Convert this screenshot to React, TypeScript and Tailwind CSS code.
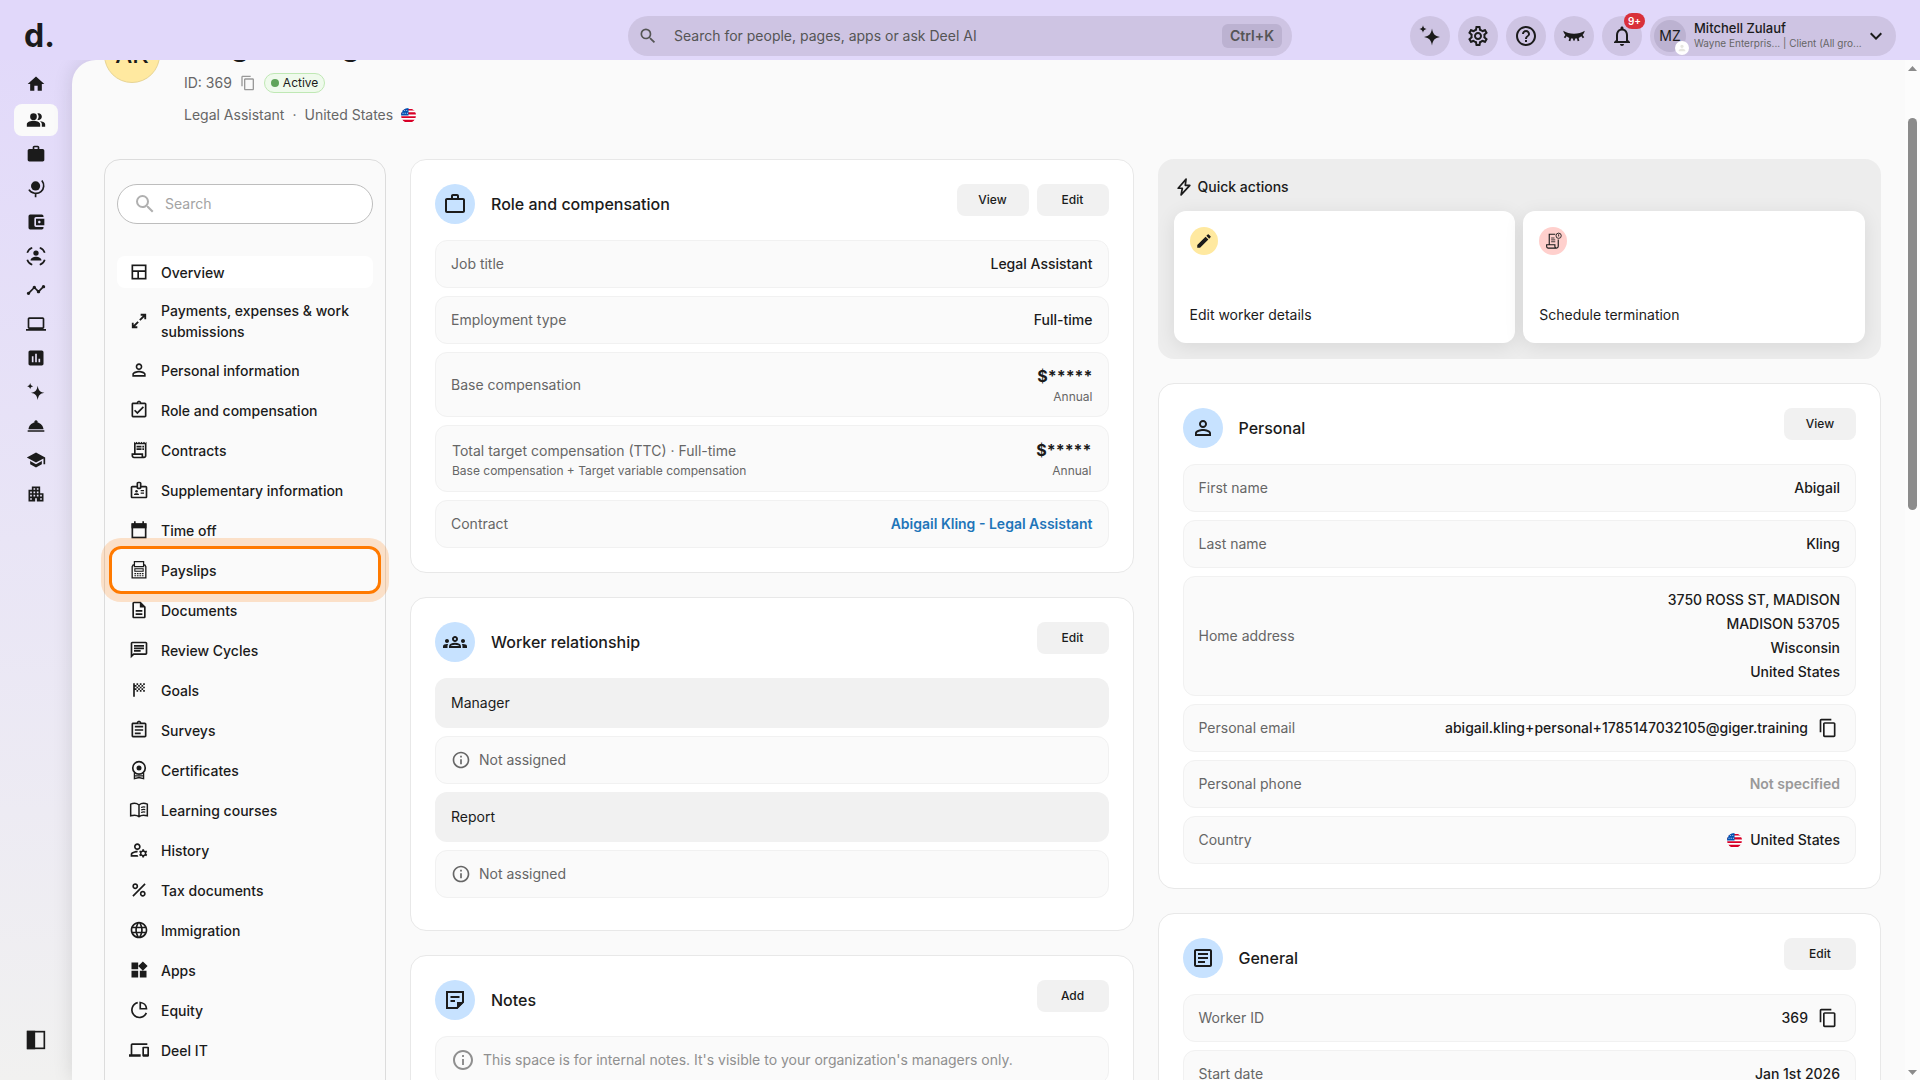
import React from 'react';
import clsx from 'clsx';
import {
  MdAccountBalanceWallet,
  MdApartment,
  MdAssessment,
  MdContentCopy,
  MdEdit,
  MdHelpOutline,
  MdHome,
  MdInfoOutline,
  MdKeyboardArrowDown,
  MdLanguage,
  MdLaptop,
  MdNotificationsNone,
  MdOutlineArticle,
  MdOutlineAssignment,
  MdOutlineAssignmentTurnedIn,
  MdOutlineBadge,
  MdOutlineChat,
  MdOutlineDescription,
  MdOutlineDevices,
  MdOutlineGroups,
  MdOutlineManageAccounts,
  MdOutlineReceiptLong,
  MdOutlineSettings,
  MdPeopleAlt,
  MdPercent,
  MdPermIdentity,
  MdPerson,
  MdRoomService,
  MdSchool,
  MdSearch,
  MdSportsScore,
  MdTimeline,
  MdWidgets,
  MdWork,
  MdWorkOutline,
} from 'react-icons/md';

type IconType = React.ComponentType<{ className?: string }>;

function icon(children: React.ReactNode, filled = false): IconType {
  return function Icon({ className }) {
    return (
      <svg
        viewBox="0 0 24 24"
        className={className}
        fill={filled ? 'currentColor' : 'none'}
        stroke={filled ? 'none' : 'currentColor'}
        strokeWidth={2}
        aria-hidden="true"
      >
        {children}
      </svg>
    );
  };
}

const Sparkles = icon(
  <>
    <path d="M14 4.5c1 5.6 2.6 7.3 8 8.5-5.4 1.2-7 2.9-8 8.5-1-5.6-2.6-7.3-8-8.5 5.4-1.2 7-2.900 8-8.500z" />
    <path d="M5 1.200c.5 2.500 1.300 3.300 3.600 3.800C6.300 5.500 5.500 6.300 5 8.800 4.500 6.300 3.700 5.500 1.400 5 3.700 4.500 4.500 3.700 5 1.200z" />
  </>,
  true,
);
const GlobeStand = icon(
  <>
    <circle cx="11.500" cy="9.500" r="5.500" fill="currentColor" stroke="none" />
    <path d="M19 3c3.400 4.300 2.800 10.200-1 13.300-4.200 3.400-11.500 2.700-14.500-2.300M11.500 18v5" />
  </>,
);
const PersonFocus = icon(
  <>
    <circle cx="12" cy="8.500" r="3.200" fill="currentColor" stroke="none" />
    <path d="M5.500 17.500c0-3 3.500-4.500 6.500-4.500s6.500 1.500 6.500 4.500z" fill="currentColor" stroke="none" />
    <path d="M1.500 8C2.500 5 4.500 3 7.500 2M16.500 2c3 1 5 3 6 6M1.500 16.500c1 3 3 5 6 6M22.500 16.500c-1 3-3 5-6 6" />
  </>,
);
const Panel = icon(
  <>
    <rect x="2" y="2" width="20" height="20" />
    <path d="M2 2h8v20H2z" fill="currentColor" />
  </>,
);
const ClosedEye = icon(
  <>
    <path d="M1.200 6.800c3 2 6.800 2.900 10.800 2.900s7.800-.9 10.800-2.900c-1.200 4.500-5.300 8-10.800 8S2.400 11.300 1.200 6.800z" fill="currentColor" stroke="none" />
    <path d="M4.500 11l-2 2.800M8.500 13l-1 4M15.500 13l1 4M19.500 11l2 2.800M12 14v2.500" strokeWidth="1.800" />
  </>,
);
const Overview = icon(
  <>
    <rect x="4" y="4" width="16" height="16" />
    <path d="M4 11h16M11 11v9" />
  </>,
);
const Transfer = icon(
  <path d="M13 11l6.500-6.500M14 4.500h5.500V10M11 13l-6.500 6.500M4.500 14v5.500H10" strokeWidth="2.200" />,
);
const Calendar = icon(
  <>
    <rect x="4" y="5" width="16" height="16" />
    <path d="M3 4h18v6H3z" fill="currentColor" stroke="none" />
    <path d="M7 1.500V5M17 1.500V5" />
  </>,
);
const PayMachine = icon(
  <>
    <path d="M6.500 8V2h11v6z" strokeWidth="1.500" />
    <path d="M6 6H5L3.800 8v13.500h16.400V8L19 6h-1" strokeWidth="1.600" />
    <rect x="7" y="10.500" width="10" height="3" strokeWidth="1.300" />
    <path d="M6.500 16.300h11M6.500 18.900h11" strokeWidth="1.400" strokeDasharray="2 1" />
  </>,
);
const Rosette = icon(
  <>
    <circle cx="12" cy="9.500" r="7.500" />
    <circle cx="12" cy="9.500" r="3" fill="currentColor" stroke="none" />
    <path d="M6.500 15.500v7l5.500-1.500 5.500 1.500v-7M7 19h10" strokeWidth="1.600" />
  </>,
);
const OpenBook = icon(
  <>
    <path d="M12 6C9.500 4 5 3.800 2 5v14c3-1 7.500-1 10 1 2.500-2 7-2 10-1V5c-3-1.200-7.500-1-10 1zM12 6v14" strokeWidth="1.800" />
    <path d="M14.500 9c1.600-.7 3.300-.8 5-.5M14.500 12c1.600-.7 3.300-.8 5-.5M14.500 15c1.600-.7 3.300-.8 5-.5" strokeWidth="1.400" />
  </>,
);
const PieSlice = icon(
  <>
    <path d="M10.500 3.200A9 9 0 1 0 20.800 15.500" />
    <path d="M13.500 3v7.500H21A8 8 0 0 0 13.500 3z" />
  </>,
);
const StickyNote = icon(
  <>
    <path d="M20 14V4H4v16h10z" />
    <path d="M21 14h-7v7z" fill="currentColor" stroke="none" />
    <path d="M7.500 9h9M7.500 13H12" />
  </>,
);
const Bolt = icon(<path d="M14.500 2.500L5 13.500h5L8.500 21.500 19 10h-5.500z" strokeLinejoin="round" />);
const Termination = icon(
  <>
    <path d="M15 3H7v14M19 10v9a2.500 2.500 0 0 1-2.500 2.500h-11A2.500 2.500 0 0 1 3.500 19v-2h11v2a2.500 2.500 0 0 0 2.500 2.500" strokeWidth="1.500" />
    <path d="M9.500 8H14M9.500 10.500H15M9.500 13H15" strokeWidth="1.100" />
    <circle cx="19.500" cy="5" r="3.500" strokeWidth="1.200" />
    <path d="M19.500 3v3" strokeWidth="1.200" />
  </>,
);

function UsFlag() {
  return (
    <svg viewBox="0 0 14 14" className="size-[15px] shrink-0" role="img" aria-label="United States flag">
      <clipPath id="flag-circle">
        <circle cx="7" cy="7" r="7" />
      </clipPath>
      <g clipPath="url(#flag-circle)">
        <path fill="#fff" d="M0 0h14v14H0z" />
        <path fill="#d80027" d="M0 1h14v1.300H0zM0 4h14v2H0zM0 7.800h14v1.500H0zM0 11h14v2H0z" />
        <path fill="#0052b4" d="M0 0h7v7H0z" />
        <path fill="#fff" d="M3 2h.8v.8H3zM5 2h.8v.8H5zM1.500 4.500h.8v.8h-.8zM3.500 4.500h.8v.8h-.8zM5.500 4.500h.8v.8h-.8z" />
      </g>
    </svg>
  );
}

const railItems: { label: string; Icon: IconType; active?: boolean }[] = [
  { label: 'Home', Icon: MdHome },
  { label: 'People', Icon: MdPeopleAlt, active: true },
  { label: 'Hiring', Icon: MdWork },
  { label: 'Global', Icon: GlobeStand },
  { label: 'Payroll', Icon: MdAccountBalanceWallet },
  { label: 'Engage', Icon: PersonFocus },
  { label: 'Performance', Icon: MdTimeline },
  { label: 'IT', Icon: MdLaptop },
  { label: 'Analytics', Icon: MdAssessment },
  { label: 'AI', Icon: Sparkles },
  { label: 'Services', Icon: MdRoomService },
  { label: 'Learning', Icon: MdSchool },
  { label: 'Organization', Icon: MdApartment },
];

const navItems: { label: string; Icon: IconType }[] = [
  { label: 'Overview', Icon: Overview },
  { label: 'Payments, expenses & work submissions', Icon: Transfer },
  { label: 'Personal information', Icon: MdPermIdentity },
  { label: 'Role and compensation', Icon: MdOutlineAssignmentTurnedIn },
  { label: 'Contracts', Icon: MdOutlineReceiptLong },
  { label: 'Supplementary information', Icon: MdOutlineBadge },
  { label: 'Time off', Icon: Calendar },
  { label: 'Payslips', Icon: PayMachine },
  { label: 'Documents', Icon: MdOutlineDescription },
  { label: 'Review Cycles', Icon: MdOutlineChat },
  { label: 'Goals', Icon: MdSportsScore },
  { label: 'Surveys', Icon: MdOutlineAssignment },
  { label: 'Certificates', Icon: Rosette },
  { label: 'Learning courses', Icon: OpenBook },
  { label: 'History', Icon: MdOutlineManageAccounts },
  { label: 'Tax documents', Icon: MdPercent },
  { label: 'Immigration', Icon: MdLanguage },
  { label: 'Apps', Icon: MdWidgets },
  { label: 'Equity', Icon: PieSlice },
  { label: 'Deel IT', Icon: MdOutlineDevices },
];

const headerActions: { label: string; Icon: IconType; badge?: string }[] = [
  { label: 'Deel AI', Icon: Sparkles },
  { label: 'Settings', Icon: MdOutlineSettings },
  { label: 'Help', Icon: MdHelpOutline },
  { label: 'Hide sensitive data', Icon: ClosedEye },
  { label: 'Notifications', Icon: MdNotificationsNone, badge: '9+' },
];

function Header() {
  return (
    <header className="relative z-10 grid h-[60px] shrink-0 grid-cols-[1fr_minmax(0,664px)_1fr] items-center bg-[#e1d8fa] px-6 pt-3">
      <a href="#" aria-label="Deel home" className="text-[32px] leading-10 font-bold">
        d.
      </a>
      <label className="flex h-10 items-center rounded-full bg-[#cec4e3] px-2.5 text-[#555]">
        <MdSearch className="size-5" />
        <input
          type="search"
          aria-label="Global search"
          placeholder="Search for people, pages, apps or ask Deel AI"
          className="ml-4 min-w-0 flex-1 bg-transparent text-sm outline-none placeholder:text-[#555]"
        />
        <kbd className="rounded-md bg-[#bcb2d1] px-2 font-[Inter,sans-serif] text-sm leading-6 font-semibold">Ctrl+K</kbd>
      </label>
      <div className="flex items-center justify-end gap-2">
        {headerActions.map(({ label, Icon, badge }) => (
          <button
            key={label}
            aria-label={label}
            className="relative flex size-10 items-center justify-center rounded-full bg-[#cec4e3]"
          >
            <Icon className="size-6" />
            {badge && (
              <span className="absolute -top-[3px] -right-[3px] rounded-full bg-[#d9303a] px-1 text-[10px] leading-4 font-semibold text-white">
                {badge}
              </span>
            )}
          </button>
        ))}
        <button className="flex h-10 w-[246px] items-center rounded-full bg-[#cec4e3] pr-2 pl-1 text-left">
          <span className="relative flex size-8 shrink-0 items-center justify-center rounded-full bg-[#bcb2d1] text-sm">
            MZ
            <span className="absolute -right-[3px] -bottom-[3px] flex size-[14px] items-center justify-center rounded-full bg-white text-[#e6e6e0]">
              <MdPerson className="size-2.5" />
            </span>
          </span>
          <span className="ml-2 min-w-0 flex-1 whitespace-nowrap">
            <span className="block text-[13px] leading-[14px] font-medium">Mitchell Zulauf</span>
            <span className="block text-[10px] leading-4 text-[#666]">Wayne Enterpris... | Client (All gro...</span>
          </span>
          <MdKeyboardArrowDown className="size-6 shrink-0" />
        </button>
      </div>
    </header>
  );
}

function Rail() {
  return (
    <nav aria-label="Main" className="flex w-[72px] shrink-0 flex-col items-center gap-0.5 py-2">
      {railItems.map(({ label, Icon, active }) => (
        <a
          key={label}
          href="#"
          aria-label={label}
          className={clsx('flex h-8 w-11 shrink-0 items-center justify-center rounded-lg', active && 'mt-0.5 bg-[#fafafa]')}
        >
          <Icon className="size-5" />
        </a>
      ))}
      <button aria-label="Expand menu" className="mt-auto mb-4 flex h-8 w-11 items-center justify-center">
        <Panel className="size-5" />
      </button>
    </nav>
  );
}

function Profile() {
  return (
    <div className="flex">
      <div className="mt-0.5 flex size-14 items-center justify-center rounded-full border border-[#e6d394] bg-[#ffe9a0] text-2xl font-medium">
        AK
      </div>
      <div className="ml-6 text-sm leading-6 text-[#666]">
        <h1 className="text-[29px] leading-[42px] font-semibold text-[#1b1b1b]">Abigail Kling</h1>
        <div className="mt-1 flex items-center">
          <span>ID: 369</span>
          <button aria-label="Copy ID" className="ml-2 text-[#999]">
            <MdContentCopy className="size-4" />
          </button>
          <span className="ml-2 flex items-center gap-1 rounded-full border border-[#bfe8b4] bg-[#effaec] px-1.5 text-xs leading-[18px] text-[#1b1b1b]">
            <span className="size-2 rounded-full bg-[#5fa45a]" />
            Active
          </span>
        </div>
        <div className="mt-2 flex items-center gap-2">
          <span>Legal Assistant</span>
          <span>·</span>
          <span>United States</span>
          <UsFlag />
        </div>
      </div>
    </div>
  );
}

function SideMenu() {
  return (
    <aside className="rounded-2xl border border-[#dcdcdc] px-3 py-6">
      <label className="flex h-10 items-center rounded-full border border-[#bdbdbd] bg-white px-[15px] text-[#b0b0b0]">
        <MdSearch className="size-6 shrink-0" />
        <input
          type="search"
          aria-label="Search worker profile"
          placeholder="Search"
          className="ml-2 min-w-0 flex-1 bg-transparent text-sm outline-none placeholder:text-[#a3a3a3]"
        />
      </label>
      <nav aria-label="Worker profile" className="mt-8 flex flex-col gap-2">
        {navItems.map(({ label, Icon }) => (
          <a
            key={label}
            href="#"
            className={clsx(
              'relative flex min-h-8 items-center gap-3 rounded-lg px-3 py-1 text-sm leading-[21px] font-medium',
              label === 'Overview' && 'bg-white',
            )}
          >
            <Icon className="size-5 shrink-0" />
            {label}
            {label === 'Payslips' && (
              <span className="absolute -inset-2 z-10 rounded-xl border-3 border-[#ff7a00] shadow-[0_0_0_8px_rgba(255,122,0,0.2)]" />
            )}
          </a>
        ))}
      </nav>
    </aside>
  );
}

interface CardProps {
  title: string;
  Icon: IconType;
  actions: string[];
  className?: string;
  children: React.ReactNode;
}

function Card({ title, Icon, actions, className, children }: CardProps) {
  return (
    <section className={clsx('rounded-2xl border border-[#e8e8e8] bg-white p-6', className)}>
      <div className="mb-4 flex items-start">
        <span className="flex size-10 items-center justify-center rounded-full bg-[#c7e2ff]">
          <Icon className="size-6" />
        </span>
        <h2 className="ml-4 text-base leading-10 font-medium">{title}</h2>
        <div className="ml-auto flex gap-2">
          {actions.map((action) => (
            <button key={action} className="h-8 w-[72px] rounded-lg bg-[#f1f1f1] text-xs font-medium">
              {action}
            </button>
          ))}
        </div>
      </div>
      <div className="flex flex-col gap-2">{children}</div>
    </section>
  );
}

function Row({ label, children }: { label: string; children: React.ReactNode }) {
  return (
    <div className="flex items-center justify-between gap-4 rounded-xl border border-[#f1f1f1] bg-[#fafafa] px-[15px] py-[11px] text-sm leading-6">
      <span className="text-[#666]">{label}</span>
      <div className="text-right font-medium">{children}</div>
    </div>
  );
}

function Masked() {
  return (
    <div className="-my-0.5 pt-1 text-right">
      <div className="text-base leading-[21px] font-bold">$*****</div>
      <div className="text-xs leading-5 font-normal text-[#666]">Annual</div>
    </div>
  );
}

function CopyValue({ value }: { value: string }) {
  return (
    <span className="flex items-center gap-2">
      {value}
      <button aria-label={`Copy ${value}`} className="flex size-6 items-center justify-center">
        <MdContentCopy className="size-5" />
      </button>
    </span>
  );
}

function NotAssigned() {
  return (
    <div className="flex items-center gap-2 rounded-xl border border-[#f1f1f1] bg-[#fafafa] px-[15px] py-[11px] text-sm leading-6 text-[#666]">
      <MdInfoOutline className="size-5" />
      Not assigned
    </div>
  );
}

function GroupTitle({ children }: { children: React.ReactNode }) {
  return <h3 className="rounded-xl bg-[#f1f1f1] px-4 py-[13px] text-sm leading-6">{children}</h3>;
}

function QuickAction({ label, tone, children }: { label: string; tone: string; children: React.ReactNode }) {
  return (
    <button className="flex h-[132px] flex-col items-start justify-between rounded-xl bg-white p-4 text-sm leading-6 shadow-[0_4px_20px_rgba(0,0,0,0.09)]">
      <span className={clsx('flex size-7 items-center justify-center rounded-full', tone)}>{children}</span>
      {label}
    </button>
  );
}

function QuickActions() {
  return (
    <section className="overflow-hidden rounded-2xl bg-[#ededed] p-4">
      <h2 className="flex items-center gap-1 text-sm leading-6 font-medium">
        <Bolt className="size-5" />
        Quick actions
      </h2>
      <div className="mt-3 grid grid-cols-2 gap-2">
        <QuickAction label="Edit worker details" tone="bg-[#ffe9a0]">
          <MdEdit className="size-[18px]" />
        </QuickAction>
        <QuickAction label="Schedule termination" tone="bg-[#ffd0cd]">
          <Termination className="size-[18px]" />
        </QuickAction>
      </div>
    </section>
  );
}

function Scrollbar() {
  return (
    <div aria-hidden="true" className="flex w-[15px] shrink-0 flex-col items-center bg-[#fcfcfc] text-[#8b8b8b]">
      <svg viewBox="0 0 15 15" className="size-[15px]" fill="currentColor">
        <path d="M3 11l4.500-5 4.500 5z" />
      </svg>
      <div className="mt-[43px] h-[392px] w-[9px] rounded-full bg-[#8b8b8b]" />
      <svg viewBox="0 0 15 15" className="mt-auto size-[15px]" fill="currentColor">
        <path d="M3 5l4.500 5L12 5z" />
      </svg>
    </div>
  );
}

export default function App() {
  return (
    <div className="flex h-screen flex-col overflow-hidden bg-linear-to-b from-[#e1d8fa] via-[#e9e5f6] to-[#f1f1f0] font-[Inter,sans-serif] text-[#1b1b1b]">
      <Header />
      <div className="flex min-h-0 flex-1">
        <Rail />
        <main className="flex min-w-0 flex-1 overflow-hidden rounded-tl-3xl bg-[#fafafa] shadow-[0_0_20px_rgba(0,0,0,0.12)]">
          <div className="min-w-0 flex-1 pr-6 pl-8">
            {/* page is scrolled down, the heading slides under the top bar */}
            <div className="-mt-[35px]">
              <Profile />
            </div>
            <div className="mt-8 grid grid-cols-[282px_minmax(0,1fr)_minmax(0,1fr)] gap-6 pb-8">
              <SideMenu />
              <div className="flex flex-col gap-6">
                <Card title="Role and compensation" Icon={MdWorkOutline} actions={['View', 'Edit']}>
                  <Row label="Job title">Legal Assistant</Row>
                  <Row label="Employment type">Full-time</Row>
                  <Row label="Base compensation">
                    <Masked />
                  </Row>
                  <div className="flex items-center justify-between gap-4 rounded-xl border border-[#f1f1f1] bg-[#fafafa] px-4 py-3">
                    <div className="-my-0.5 pt-1 text-[#666]">
                      <div className="text-sm leading-[21px]">Total target compensation (TTC) · Full-time</div>
                      <div className="text-xs leading-5">Base compensation + Target variable compensation</div>
                    </div>
                    <Masked />
                  </div>
                  <Row label="Contract">
                    <a href="#" className="font-semibold text-[#1f75b9]">
                      Abigail Kling - Legal Assistant
                    </a>
                  </Row>
                </Card>
                <Card title="Worker relationship" Icon={MdOutlineGroups} actions={['Edit']} className="pb-8">
                  <GroupTitle>Manager</GroupTitle>
                  <NotAssigned />
                  <GroupTitle>Report</GroupTitle>
                  <NotAssigned />
                </Card>
                <Card title="Notes" Icon={StickyNote} actions={['Add']}>
                  <div className="flex items-center gap-2 rounded-xl border border-[#f1f1f1] bg-[#fafafa] px-[15px] py-[11px] text-sm leading-6 text-[#8f8f8f]">
                    <MdInfoOutline className="size-6" />
                    This space is for internal notes. It's visible to your organization's managers only.
                  </div>
                </Card>
              </div>
              <div className="flex flex-col gap-6">
                <QuickActions />
                <Card title="Personal" Icon={MdPermIdentity} actions={['View']}>
                  <Row label="First name">Abigail</Row>
                  <Row label="Last name">Kling</Row>
                  <Row label="Home address">
                    <address className="not-italic">
                      <div>3750 ROSS ST, MADISON</div>
                      <div>MADISON 53705</div>
                      <div>Wisconsin</div>
                      <div>United States</div>
                    </address>
                  </Row>
                  <Row label="Personal email">
                    <CopyValue value="abigail.kling+personal+1785147032105@giger.training" />
                  </Row>
                  <Row label="Personal phone">
                    <span className="font-semibold text-[#999]">Not specified</span>
                  </Row>
                  <Row label="Country">
                    <span className="flex items-center gap-2">
                      <UsFlag />
                      United States
                    </span>
                  </Row>
                </Card>
                <Card title="General" Icon={MdOutlineArticle} actions={['Edit']}>
                  <Row label="Worker ID">
                    <CopyValue value="369" />
                  </Row>
                  <Row label="Start date">Jan 1st 2026</Row>
                </Card>
              </div>
            </div>
          </div>
          <Scrollbar />
        </main>
      </div>
    </div>
  );
}
